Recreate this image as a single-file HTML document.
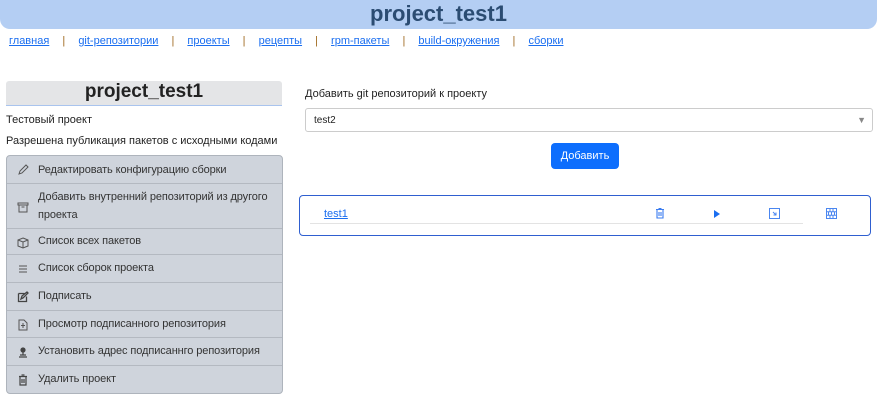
<!DOCTYPE html>
<html><head><meta charset="utf-8"><style>
*{box-sizing:border-box}
body{margin:0;width:893px;height:406px;background:#fff;font-family:"Liberation Sans",sans-serif;position:relative;overflow:hidden}
.hdr{position:absolute;left:0;top:0;width:877px;height:29px;background:#b4cef3;border-radius:0 0 10px 10px;text-align:center;font-size:22px;font-weight:bold;color:#2b4c72;line-height:27px}
.nav{position:absolute;left:9px;top:35px;font-size:11px;white-space:nowrap}
.nav a{color:#1a6ef0;text-decoration:underline}
.nav span{display:inline-block;width:29px;text-align:center;color:#a06a20}
.ttl{position:absolute;left:6px;top:81px;width:276px;height:25px;background:#e4e5e7;border-bottom:1px solid #a9c4ee;border-radius:3px 3px 0 0;text-align:center;font-size:19px;font-weight:bold;color:#222;line-height:22px}
.t{position:absolute;left:6px;font-size:11px;color:#222}
.list{position:absolute;left:6px;top:155px;width:277px;height:239px;background:#cfd4dc;border:1px solid #aeb4bc;border-radius:4px}
.row{position:absolute;left:0;width:275px;border-bottom:1px solid #b4b9c1;font-size:11px;color:#333}
.row .ic{position:absolute;left:10px;width:12px;height:12px}
.row .tx{position:absolute;left:31px;line-height:18px;white-space:nowrap;letter-spacing:-0.1px}
.lbl{position:absolute;left:305px;top:88px;font-size:11px;color:#222}
.sel{position:absolute;left:305px;top:108px;width:568px;height:24px;border:1px solid #ccc;border-radius:3px;font-size:10px;color:#222;padding:6px 8px}
.sel i{position:absolute;right:6px;top:6px;font-style:normal;color:#888;font-size:9px}
.btn{position:absolute;left:551px;top:143px;width:68px;height:26px;background:#0d6efd;border-radius:4px;color:#fff;font-size:11px;text-align:center;line-height:26px}
.card{position:absolute;left:299px;top:195px;width:572px;height:41px;border:1px solid #2f5fd0;border-radius:4px}
.card a{position:absolute;left:24px;top:12px;font-size:11px;color:#1a6ef0;text-decoration:underline}
.card .ln{position:absolute;left:10px;top:27px;width:493px;height:1px;background:#e3e3e3}
</style></head><body>
<div class="hdr">project_test1</div>
<div class="nav"><a>главная</a><span>|</span><a>git-репозитории</a><span>|</span><a>проекты</a><span>|</span><a>рецепты</a><span>|</span><a>rpm-пакеты</a><span>|</span><a>build-окружения</a><span>|</span><a>сборки</a></div>
<div class="ttl">project_test1</div>
<div class="t" style="top:114px">Тестовый проект</div>
<div class="t" style="top:135px">Разрешена публикация пакетов с исходными кодами</div>
<div class="list">
<div class="row" style="top:0;height:28px"><svg class="ic" style="top:8px" viewBox="0 0 12 12"><path d="M2 10l1-3 6-6 2 2-6 6z" fill="none" stroke="#555" stroke-width="1"/></svg><div class="tx" style="top:5px">Редактировать конфигурацию сборки</div></div>
<div class="row" style="top:28px;height:45px"><svg class="ic" style="top:17px" viewBox="0 0 12 12"><path d="M1 2h10v2H1zM2 4v7h8V4M4.5 6h3" fill="none" stroke="#555"/></svg><div class="tx" style="top:4px">Добавить внутренний репозиторий из другого<br>проекта</div></div>
<div class="row" style="top:73px;height:26px"><svg class="ic" style="top:8px" viewBox="0 0 12 12"><path d="M6 1l5 2v6l-5 2-5-2V3zM1 3l5 2 5-2M6 5v6" fill="none" stroke="#555"/></svg><div class="tx" style="top:3px">Список всех пакетов</div></div>
<div class="row" style="top:99px;height:28px"><svg class="ic" style="top:8px" viewBox="0 0 12 12"><path d="M2 3h8M2 6h8M2 9h8" stroke="#555"/></svg><div class="tx" style="top:4px">Список сборок проекта</div></div>
<div class="row" style="top:127px;height:28px"><svg class="ic" style="top:8px" viewBox="0 0 12 12"><path d="M1.5 2.5h6M1.5 2.5v8h8v-5M4 8l1-3 5-4 1 1-5 5z" fill="none" stroke="#444" stroke-width="1.3"/></svg><div class="tx" style="top:4px">Подписать</div></div>
<div class="row" style="top:155px;height:27px"><svg class="ic" style="top:8px" viewBox="0 0 12 12"><path d="M2 1h5l3 3v7H2zM6 4v5M4 6.5h4" fill="none" stroke="#555"/></svg><div class="tx" style="top:4px">Просмотр подписанного репозитория</div></div>
<div class="row" style="top:182px;height:28px"><svg class="ic" style="top:8px" viewBox="0 0 12 12"><circle cx="6" cy="4" r="2.6" fill="#444"/><path d="M6 6v3M2 11h8M3 9h6" stroke="#444" stroke-width="1.2"/></svg><div class="tx" style="top:4px">Установить адрес подписаннго репозитория</div></div>
<div class="row" style="top:210px;height:28px;border:none"><svg class="ic" style="top:8px" viewBox="0 0 12 12"><path d="M2 2.5h8M4.5 1h3M3 3v8h6V3M5 5v4M7 5v4" fill="none" stroke="#444" stroke-width="1.2"/></svg><div class="tx" style="top:4px">Удалить проект</div></div>
</div>
<div class="lbl">Добавить git репозиторий к проекту</div>
<div class="sel">test2<i>▼</i></div>
<div class="btn">Добавить</div>
<div class="card"><a>test1</a><div class="ln"></div>
<svg style="position:absolute;left:355px;top:12px" width="10" height="11" viewBox="0 0 10 11"><path d="M1 1.5h8M3.5.5h3M2 2v8h6V2M4 4v4M6 4v4" fill="none" stroke="#3b7cf0" stroke-width="1.1"/></svg>
<svg style="position:absolute;left:414px;top:14px" width="7" height="8"><path d="M0 0l6 4-6 4z" fill="#1a6ef0"/></svg>
<svg style="position:absolute;left:469px;top:12px" width="11" height="11"><rect x=".5" y=".5" width="10" height="10" fill="none" stroke="#4a86f0"/><path d="M4 4l3 3M7 4.5V7H4.5" fill="none" stroke="#4a86f0"/></svg>
<svg style="position:absolute;left:526px;top:12px" width="11" height="11"><path d="M.5 .5h10v10H.5zM.5 3.8h10M.5 7.2h10M4 .5v3.3M7 .5v3.3M2.5 3.8v3.4M5.5 3.8v3.4M8.5 3.8v3.4M4 7.2v3.3M7 7.2v3.3" fill="none" stroke="#4a86f0"/></svg>
</div>
</body></html>
